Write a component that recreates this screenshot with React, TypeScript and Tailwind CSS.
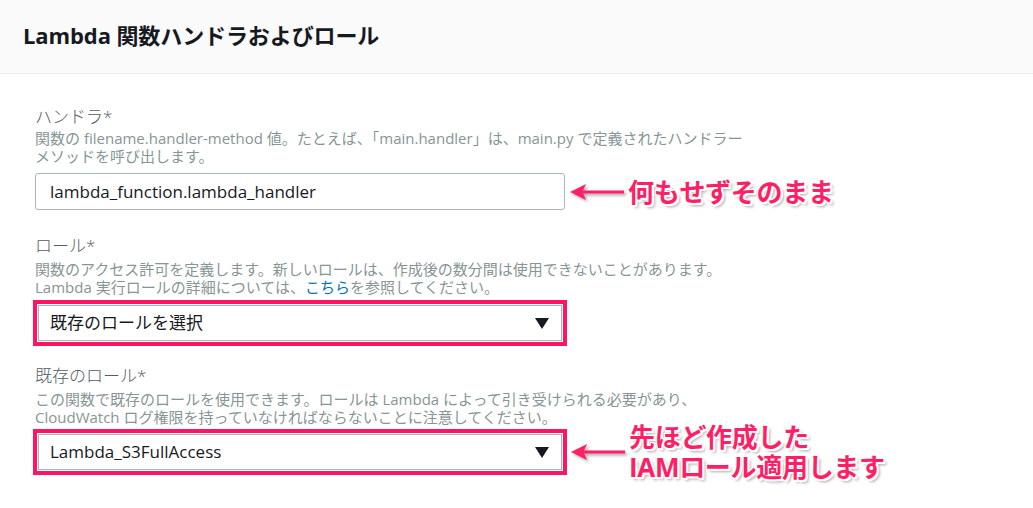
import React from "react";

const FONT = { fontFamily: '"Open Sans", "Noto Sans CJK JP", sans-serif' };

const noteClass =
  "font-bold text-[26px] leading-[30px] text-[#ff1f66] tracking-[-0.3px] [text-shadow:1px_1px_0_#fff,-1px_-1px_0_#fff,1px_-1px_0_#fff,-1px_1px_0_#fff,2px_2px_0_#fff,2px_0_0_#fff,0_2px_0_#fff,3px_3px_3px_rgba(0,0,0,0.35)]";

function ArrowLeft() {
  return (
    <svg width="58" height="24" viewBox="0 0 58 24" className="shrink-0 [filter:drop-shadow(2px_2px_1.5px_rgba(0,0,0,0.35))]">
      <path d="M2 12 L18 4 L15 10.5 L56 10.5 L56 13.5 L15 13.5 L18 20 Z" fill="#ff1f66" />
    </svg>
  );
}

function Caret() {
  return (
    <svg width="14" height="11" viewBox="0 0 14 11" className="shrink-0">
      <path d="M0 0 H14 L7 11 Z" fill="#16191f" />
    </svg>
  );
}

function SelectBox({ value }: { value: string }) {
  return (
    <div className="w-[534px] border-4 border-[#ff1464] p-px">
      <div className="h-[36px] bg-white border border-[#aab7b8] flex items-center justify-between pl-[11px] pr-[12px]">
        <span className="text-[17px] text-[#16191f]">{value}</span>
        <Caret />
      </div>
    </div>
  );
}

export default function App() {
  return (
    <div className="w-[1033px] h-[508px] bg-white overflow-hidden" style={FONT}>
      <div className="h-[74px] bg-[#fafafa] border-b border-[#eaeded] flex items-center px-[23px] pb-[3px]">
        <h2 className="text-[22px] font-bold text-[#16191f] tracking-[-0.1px]">Lambda 関数ハンドラおよびロール</h2>
      </div>

      <div className="pl-[35px] pt-[31px]">
        <div className="text-[17px] leading-[24px] text-[#545b64] font-light">ハンドラ*</div>
        <p className="text-[15px] leading-[18px] text-[#879596] w-[760px]">
          関数の filename.handler-method 値。たとえば、「main.handler」は、main.py で定義されたハンドラー
          <br />
          メソッドを呼び出します。
        </p>
        <div className="flex items-center mt-[8px]">
          <div className="w-[530px] h-[37px] border border-[#aab7b8] rounded-[3px] flex items-center px-[14px]">
            <span className="text-[17px] text-[#16191f]">lambda_function.lambda_handler</span>
          </div>
          <div className="ml-[3px]">
            <ArrowLeft />
          </div>
          <span className={noteClass + " ml-[2px]"}>何もせずそのまま</span>
        </div>

        <div className="text-[17px] leading-[24px] text-[#545b64] font-light mt-[24px]">ロール*</div>
        <p className="text-[15px] leading-[18px] text-[#879596] mt-[2px]">
          関数のアクセス許可を定義します。新しいロールは、作成後の数分間は使用できないことがあります。
          <br />
          Lambda 実行ロールの詳細については、<span className="text-[#0073bb]">こちら</span>を参照してください。
        </p>
        <div className="mt-[4px] -ml-[2px]">
          <SelectBox value="既存のロールを選択" />
        </div>

        <div className="text-[17px] leading-[24px] text-[#545b64] font-light mt-[18px]">既存のロール*</div>
        <p className="text-[15px] leading-[18px] text-[#879596] mt-[2px]">
          この関数で既存のロールを使用できます。ロールは Lambda によって引き受けられる必要があり、
          <br />
          CloudWatch ログ権限を持っていなければならないことに注意してください。
        </p>
        <div className="flex items-center mt-[3px] -ml-[2px] h-[46px]">
          <SelectBox value="Lambda_S3FullAccess" />
          <div className="ml-[2px]">
            <ArrowLeft />
          </div>
          <div className={noteClass + " ml-[2px] shrink-0"}>
            先ほど作成した
            <br />
            IAMロール適用します
          </div>
        </div>
      </div>
    </div>
  );
}
